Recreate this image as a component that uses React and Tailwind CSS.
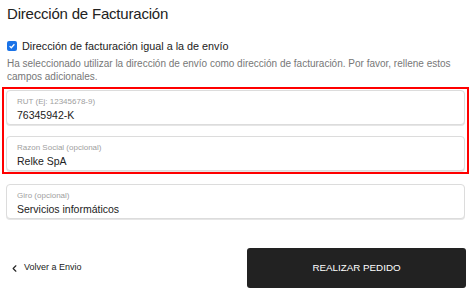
import { ChevronLeft } from 'lucide-react';

const FONT = { fontFamily: '"Liberation Sans", Arial, sans-serif' };

function Field({ label, value }) {
  return (
    <div className="h-[35px] rounded-[4px] border border-[#dcdcdc] bg-white px-[10px] pt-[6px] shadow-[0_1px_0_#e6e6e6]">
      <p className="text-[8px] leading-[10px] text-[#a0a0a0]">{label}</p>
      <p className="mt-[1px] text-[10.5px] leading-[14px] text-[#222]">{value}</p>
    </div>
  );
}

export default function App() {
  return (
    <div className="h-[293px] w-[471px] overflow-hidden bg-white pl-[6px] pr-[6px]" style={FONT}>
      <h2 className="pt-[4px] pl-[1px] text-[15px] leading-[20px] tracking-[-0.2px] text-[#222]">
        Dirección de Facturación
      </h2>

      <label className="mt-[15px] flex items-center gap-[5px] pl-[1px]">
        <span className="flex h-[10px] w-[10px] items-center justify-center rounded-[2px] bg-[#1a73e8]">
          <svg viewBox="0 0 10 10" className="h-[8px] w-[8px]">
            <path d="M2 5.2 L4.1 7.2 L8 2.8" fill="none" stroke="white" strokeWidth="1.6" />
          </svg>
        </span>
        <span className="text-[10.8px] leading-[14px] text-[#222]">
          Dirección de facturación igual a la de envío
        </span>
      </label>

      <p className="mt-[4px] pl-[1px] text-[10px] leading-[13px] text-[#777]">
        Ha seleccionado utilizar la dirección de envío como dirección de facturación. Por favor, rellene estos campos adicionales.
      </p>

      <div className="-mx-[4px] mt-[4px] flex flex-col gap-[11px] border-2 border-[#ff0000] px-[2px] py-[1px]">
        <Field label="RUT (Ej: 12345678-9)" value="76345942-K" />
        <Field label="Razon Social (opcional)" value="Relke SpA" />
      </div>

      <div className="mt-[10px]">
        <Field label="Giro (opcional)" value="Servicios informáticos" />
      </div>

      <div className="mt-[29px] flex items-center justify-between">
        <button className="flex items-center gap-[4px] pl-[3px] text-[9px] text-[#222]">
          <ChevronLeft size={11} strokeWidth={2.5} />
          Volver a Envio
        </button>
        <button className="mr-[-1px] h-[40px] w-[219px] rounded-[3px] bg-[#222] text-[9.8px] text-white">
          REALIZAR PEDIDO
        </button>
      </div>
    </div>
  );
}
